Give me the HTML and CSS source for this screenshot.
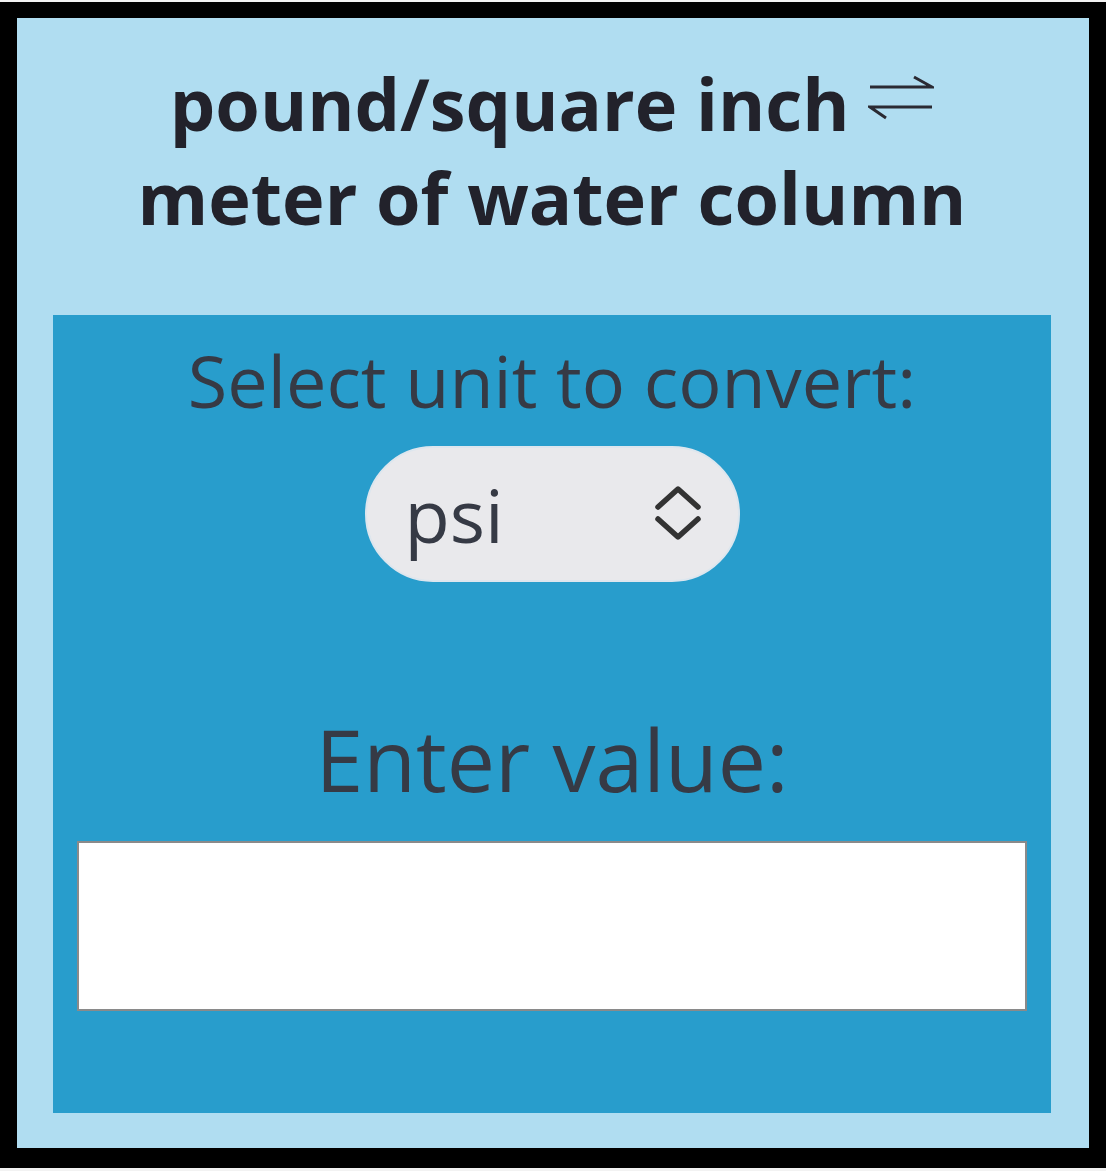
FILE: index.html
```html
<!DOCTYPE html>
<html lang="en">
<head>
    <meta charset="UTF-8">
    <meta name="viewport" content="width=device-width, initial-scale=1.0">
    <title>psi to mH2O</title>
    <link rel="stylesheet" href="styles.css">
</head>
<body>

<div class="frame">
    <div class="card">
        <h1>pound/square inch
            <svg class="swap" width="66" height="46" viewBox="0 0 66 46" aria-hidden="true">
                <path d="M2 12 H64 L46 2" fill="none" stroke="#2a2a33" stroke-width="3" stroke-linejoin="miter"/>
                <path d="M64 32 H2 L18 43" fill="none" stroke="#2a2a33" stroke-width="3" stroke-linejoin="miter"/>
            </svg>
            <br>meter of water column</h1>

        <div class="converter">
            <label for="unit" class="unit-label">Select unit to convert:</label>
            <div class="select-wrap">
                <select id="unit" name="unit">
                    <option value="psi">psi</option>
                    <option value="mh2o">mH2O</option>
                </select>
                <svg class="chevrons" width="50" height="60" viewBox="0 0 50 60" aria-hidden="true">
                    <path d="M5 23 L25 5 L45 23" fill="none" stroke="#333" stroke-width="5.5" stroke-linecap="round" stroke-linejoin="round"/>
                    <path d="M5 35 L25 53 L45 35" fill="none" stroke="#333" stroke-width="5.5" stroke-linecap="round" stroke-linejoin="round"/>
                </svg>
            </div>

            <label for="value" class="value-label">Enter value:</label>
            <input type="number" id="value" name="value">
        </div>
    </div>
</div>

</body>
</html>
```

FILE: styles.css
```css
body {
    margin: 0;
    padding-top: 2px;
    background-color: #f2f2f2;
    font-family: 'Open Sans', sans-serif;
}
.frame {
    border: 17px solid #000;
    border-bottom-width: 20px;
    border-top-width: 16px;
}
.card {
    background-color: #b0ddf1;
    padding: 38px 38px 35px 36px;
}
h1 {
    margin: 0 0 71px;
    font-size: 72px;
    line-height: 94px;
    font-weight: 700;
    color: #22222b;
    text-align: center;
}
.swap {
    vertical-align: 10px;
}
.converter {
    background-color: #289dcc;
    padding: 16px 24px 102px;
    display: flex;
    flex-direction: column;
    align-items: center;
}
.unit-label {
    font-size: 72px;
    color: #363a45;
    margin-bottom: 17px;
}
.select-wrap {
    position: relative;
    width: 375px;
    height: 136px;
}
select {
    appearance: none;
    -webkit-appearance: none;
    width: 100%;
    height: 100%;
    border: 2px solid #dde6ee;
    border-radius: 68px;
    background-color: #e9e9ec;
    padding: 0 0 0 38px;
    font-family: 'Open Sans', sans-serif;
    font-size: 74px;
    color: #363a45;
}
.chevrons {
    position: absolute;
    left: 288px;
    top: 38px;
    pointer-events: none;
}
.value-label {
    margin-top: 118px;
    font-size: 86px;
    color: #363a45;
    margin-bottom: 24px;
}
input[type="number"] {
    box-sizing: border-box;
    width: 100%;
    height: 170px;
    border: 2px solid #8a8a8a;
    background-color: #fff;
    font-size: 60px;
}
```
